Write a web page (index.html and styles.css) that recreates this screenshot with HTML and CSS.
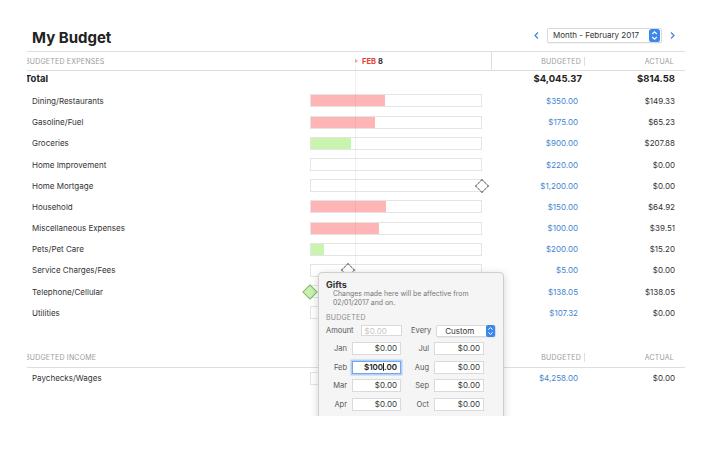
FILE: index.html
```html
<!DOCTYPE html>
<html lang="en">
<head>
    <meta charset="UTF-8">
    <meta name="viewport" content="width=device-width, initial-scale=1.0">
    <title>My Budget</title>
    <link rel="stylesheet" href="styles.css">
</head>
<body>

    <div class="app">
        <div class="titlebar">
            <h1 class="title">My Budget</h1>
            <div class="period">
                <svg class="chev" width="5" height="7" viewBox="0 0 5 7"><path d="M4 0.5 L1 3.5 L4 6.5" fill="none" stroke="#3f86cf" stroke-width="1.2"/></svg>
                <div class="select wide">
                    <span>Month - February 2017</span>
                    <svg class="stepper" width="11" height="13" viewBox="0 0 11 13"><rect width="11" height="13" rx="2.5" fill="#3b87ee"/><path d="M3.2 5 L5.5 2.8 L7.8 5 M3.2 8 L5.5 10.2 L7.8 8" fill="none" stroke="#fff" stroke-width="1.1"/></svg>
                </div>
                <svg class="chev" width="5" height="7" viewBox="0 0 5 7"><path d="M1 0.5 L4 3.5 L1 6.5" fill="none" stroke="#3f86cf" stroke-width="1.2"/></svg>
            </div>
        </div>

        <!-- expenses -->
        <div class="row head top">
            <div class="name cut">BUDGETED EXPENSES</div>
            <div class="bar-cell sep"><span class="today"><i class="mark"></i><b class="red">FEB</b> <b>8</b></span></div>
            <div class="money sep">BUDGETED</div>
            <div class="money actual">ACTUAL</div>
        </div>

        <div class="row total">
            <div class="name cut">Total</div>
            <div class="bar-cell"></div>
            <div class="money">$4,045.37</div>
            <div class="money actual">$814.58</div>
        </div>

        <div class="row">
            <div class="name">Dining/Restaurants</div>
            <div class="bar-cell"><div class="track"><div class="fill over" style="width:74px"></div></div></div>
            <div class="money blue">$350.00</div>
            <div class="money actual">$149.33</div>
        </div>
        <div class="row">
            <div class="name">Gasoline/Fuel</div>
            <div class="bar-cell"><div class="track"><div class="fill over" style="width:64px"></div></div></div>
            <div class="money blue">$175.00</div>
            <div class="money actual">$65.23</div>
        </div>
        <div class="row">
            <div class="name">Groceries</div>
            <div class="bar-cell"><div class="track"><div class="fill under" style="width:40px"></div></div></div>
            <div class="money blue">$900.00</div>
            <div class="money actual">$207.88</div>
        </div>
        <div class="row">
            <div class="name">Home Improvement</div>
            <div class="bar-cell"><div class="track"></div></div>
            <div class="money blue">$220.00</div>
            <div class="money actual">$0.00</div>
        </div>
        <div class="row">
            <div class="name">Home Mortgage</div>
            <div class="bar-cell"><div class="track"></div><i class="diamond dashed at-end"></i></div>
            <div class="money blue">$1,200.00</div>
            <div class="money actual">$0.00</div>
        </div>
        <div class="row">
            <div class="name">Household</div>
            <div class="bar-cell"><div class="track"><div class="fill over" style="width:75px"></div></div></div>
            <div class="money blue">$150.00</div>
            <div class="money actual">$64.92</div>
        </div>
        <div class="row">
            <div class="name">Miscellaneous Expenses</div>
            <div class="bar-cell"><div class="track"><div class="fill over" style="width:68px"></div></div></div>
            <div class="money blue">$100.00</div>
            <div class="money actual">$39.51</div>
        </div>
        <div class="row">
            <div class="name">Pets/Pet Care</div>
            <div class="bar-cell"><div class="track"><div class="fill under" style="width:13px"></div></div></div>
            <div class="money blue">$200.00</div>
            <div class="money actual">$15.20</div>
        </div>
        <div class="row">
            <div class="name">Service Charges/Fees</div>
            <div class="bar-cell"><div class="track"></div><i class="diamond dashed at-today"></i></div>
            <div class="money blue">$5.00</div>
            <div class="money actual">$0.00</div>
        </div>
        <div class="row">
            <div class="name">Telephone/Cellular</div>
            <div class="bar-cell"><div class="track"></div><i class="diamond green at-start"></i></div>
            <div class="money blue">$138.05</div>
            <div class="money actual">$138.05</div>
        </div>
        <div class="row">
            <div class="name">Utilities</div>
            <div class="bar-cell"><div class="track"></div></div>
            <div class="money blue">$107.32</div>
            <div class="money actual">$0.00</div>
        </div>

        <!-- income -->
        <div class="row head income">
            <div class="name cut">BUDGETED INCOME</div>
            <div class="bar-cell sep"></div>
            <div class="money sep">BUDGETED</div>
            <div class="money actual">ACTUAL</div>
        </div>
        <div class="row">
            <div class="name">Paychecks/Wages</div>
            <div class="bar-cell"><div class="track"></div></div>
            <div class="money blue">$4,258.00</div>
            <div class="money actual">$0.00</div>
        </div>

        <div class="timeline"></div>

        <!-- budget editor popover -->
        <div class="popover">
            <p class="pop-title">Gifts</p>
            <p class="pop-note">Changes made here will be affective from<br>02/01/2017 and on.</p>
            <p class="pop-section">BUDGETED</p>
            <div class="amount-row">
                <span class="lbl">Amount</span>
                <div class="field amount placeholder">$0.00</div>
                <span class="lbl every">Every</span>
                <div class="select custom">
                    <span>Custom</span>
                    <svg class="stepper" width="9" height="12" viewBox="0 0 9 12"><rect width="9" height="12" rx="2" fill="#3b87ee"/><path d="M2.4 4.6 L4.5 2.6 L6.6 4.6 M2.4 7.4 L4.5 9.4 L6.6 7.4" fill="none" stroke="#fff" stroke-width="1"/></svg>
                </div>
            </div>
            <div class="months">
                <span class="m">Jan</span><div class="field">$0.00</div>
                <span class="m">Jul</span><div class="field">$0.00</div>
                <span class="m">Feb</span><div class="field focus">$100<i class="caret"></i>.00</div>
                <span class="m">Aug</span><div class="field">$0.00</div>
                <span class="m">Mar</span><div class="field">$0.00</div>
                <span class="m">Sep</span><div class="field">$0.00</div>
                <span class="m">Apr</span><div class="field">$0.00</div>
                <span class="m">Oct</span><div class="field">$0.00</div>
                <span class="m">May</span><div class="field">$0.00</div>
                <span class="m">Nov</span><div class="field">$0.00</div>
            </div>
        </div>
    </div>

</body>
</html>
```

FILE: styles.css
```css
body {
    font-family: Inter, "Noto Sans", sans-serif;
    background-color: #fff;
    color: #333;
    margin: 0;
    padding: 0;
}
p {
    margin: 0;
}
.app {
    position: relative;
    width: 658px;
    height: 416px;
    margin-left: 27px;
    overflow: hidden;
    background: #fff;
}
.titlebar {
    display: flex;
    justify-content: space-between;
    align-items: center;
    height: 26px;
    padding: 25px 10px 0 5px;
}
.title {
    margin: 0;
    font-size: 15px;
    font-weight: 700;
    color: #222;
    position: relative;
    top: -1px;
}
.period {
    display: flex;
    align-items: center;
    gap: 8px;
    position: relative;
    top: -3px;
}
.select {
    display: flex;
    align-items: center;
    justify-content: space-between;
    background: #fff;
    border: 1px solid #d9d9d9;
    border-radius: 2px;
    box-shadow: 0 1px 1px rgba(0, 0, 0, 0.05);
    font-size: 8.5px;
    color: #333;
}
.select.wide {
    width: 107px;
    height: 13px;
    padding: 0 1px 0 5px;
    font-size: 8px;
}
.stepper {
    display: block;
}

/* table rows */
.row {
    display: grid;
    grid-template-columns: 283px 182px 93px 100px;
    align-items: center;
    height: 21.2px;
    font-size: 8px;
}
.name {
    padding-left: 5px;
    white-space: nowrap;
}
.name.cut {
    padding-left: 0;
    margin-left: -2px;
}
.money {
    text-align: right;
    padding-right: 7px;
}
.money.actual {
    padding-right: 10px;
}
.blue {
    color: #3f86cf;
}
.bar-cell {
    position: relative;
    height: 100%;
    display: flex;
    align-items: center;
}
.head {
    height: 18px;
    color: #9a9a9a;
    font-size: 7px;
    letter-spacing: 0.2px;
    border-bottom: 1px solid #dedede;
}
.head.top {
    border-top: 1px solid #dedede;
}
.head .money {
    padding-right: 3px;
}
.head .money.actual {
    padding-right: 11px;
}
.head .sep {
    border-right: 1px solid #dedede;
}
.head.income {
    margin-top: 25.4px;
}
.today {
    margin-left: 45px;
    color: #333;
    letter-spacing: 0;
    display: flex;
    align-items: center;
    gap: 2px;
    font-size: 7.5px;
}
.today b {
    font-weight: 700;
}
.red {
    color: #e8403a;
}
.mark {
    width: 0;
    height: 0;
    border-left: 3px solid #e8a0a0;
    border-top: 2px solid transparent;
    border-bottom: 2px solid transparent;
    margin-right: 2px;
}
.total {
    height: 15px;
    margin-bottom: 4.4px;
    font-weight: 700;
    font-size: 9.5px;
    color: #222;
}
.total .money {
    font-size: 9.5px;
    padding-right: 3px;
}
.total .money.actual {
    padding-right: 10px;
}
.track {
    width: 170px;
    height: 11px;
    border: 1px solid #e4e4e4;
    background: #fff;
    display: flex;
}
.fill {
    height: 100%;
}
.fill.over {
    background: #ffb5b5;
}
.fill.under {
    background: #c8f4ad;
}
.diamond {
    position: absolute;
    width: 8px;
    height: 8px;
    top: 50%;
    transform: translate(-50%, -50%) rotate(45deg);
    background: #fff;
}
.diamond.dashed {
    border: 1px dashed #777;
}
.diamond.green {
    background: #c9efb2;
    border: 1px solid #7fbf63;
    width: 9px;
    height: 9px;
}
.at-end {
    left: 172px;
}
.at-today {
    left: 38px;
}
.at-start {
    left: 0;
}
.timeline {
    position: absolute;
    left: 328px;
    top: 66px;
    width: 1px;
    height: 258px;
    background: rgba(170, 120, 120, 0.13);
}

/* popover */
.popover {
    position: absolute;
    left: 291px;
    top: 272px;
    width: 170px;
    height: 170px;
    padding: 6px 7px;
    background: #f5f5f5;
    border: 1px solid #cfcfcf;
    border-radius: 4px;
    box-shadow: 0 2px 8px rgba(0, 0, 0, 0.18);
    z-index: 5;
    font-size: 7.5px;
    color: #555;
}
.pop-title {
    font-size: 9px;
    font-weight: 700;
    color: #333;
    line-height: 11px;
}
.pop-note {
    color: #777;
    font-size: 6.9px;
    line-height: 8.7px;
    padding-left: 7px;
}
.pop-section {
    color: #8a8a8a;
    margin-top: 5.5px;
    line-height: 9px;
    font-size: 7px;
    letter-spacing: 0.2px;
}
.amount-row {
    display: flex;
    align-items: center;
    height: 12px;
    margin-top: 3px;
}
.lbl {
    color: #555;
}
.field {
    height: 11px;
    line-height: 11px;
    background: #fff;
    border: 1px solid #dadada;
    text-align: right;
    padding-right: 3px;
    font-size: 8px;
    color: #333;
    box-sizing: border-box;
}
.field.amount {
    width: 43px;
    margin-left: 7px;
    text-align: left;
    padding-left: 3px;
    color: #c4c4c4;
}
.every {
    margin-left: 9px;
}
.select.custom {
    width: 62px;
    height: 12px;
    margin-left: 5px;
    padding-left: 8px;
    box-sizing: border-box;
    font-size: 8px;
}
.months {
    display: grid;
    grid-template-columns: 21px 49px 23px 50px;
    column-gap: 5px;
    row-gap: 5.7px;
    margin-top: 5px;
    align-items: center;
}
.months .field {
    height: 13px;
    line-height: 11px;
}
.m {
    text-align: right;
    color: #555;
}
.field.focus {
    border: 1px solid #76a7e6;
    box-shadow: 0 0 0 1.5px #b3cff2;
    font-weight: 600;
    color: #222;
}
.caret {
    display: inline-block;
    width: 1px;
    height: 8px;
    background: #222;
    vertical-align: -1px;
}
```
